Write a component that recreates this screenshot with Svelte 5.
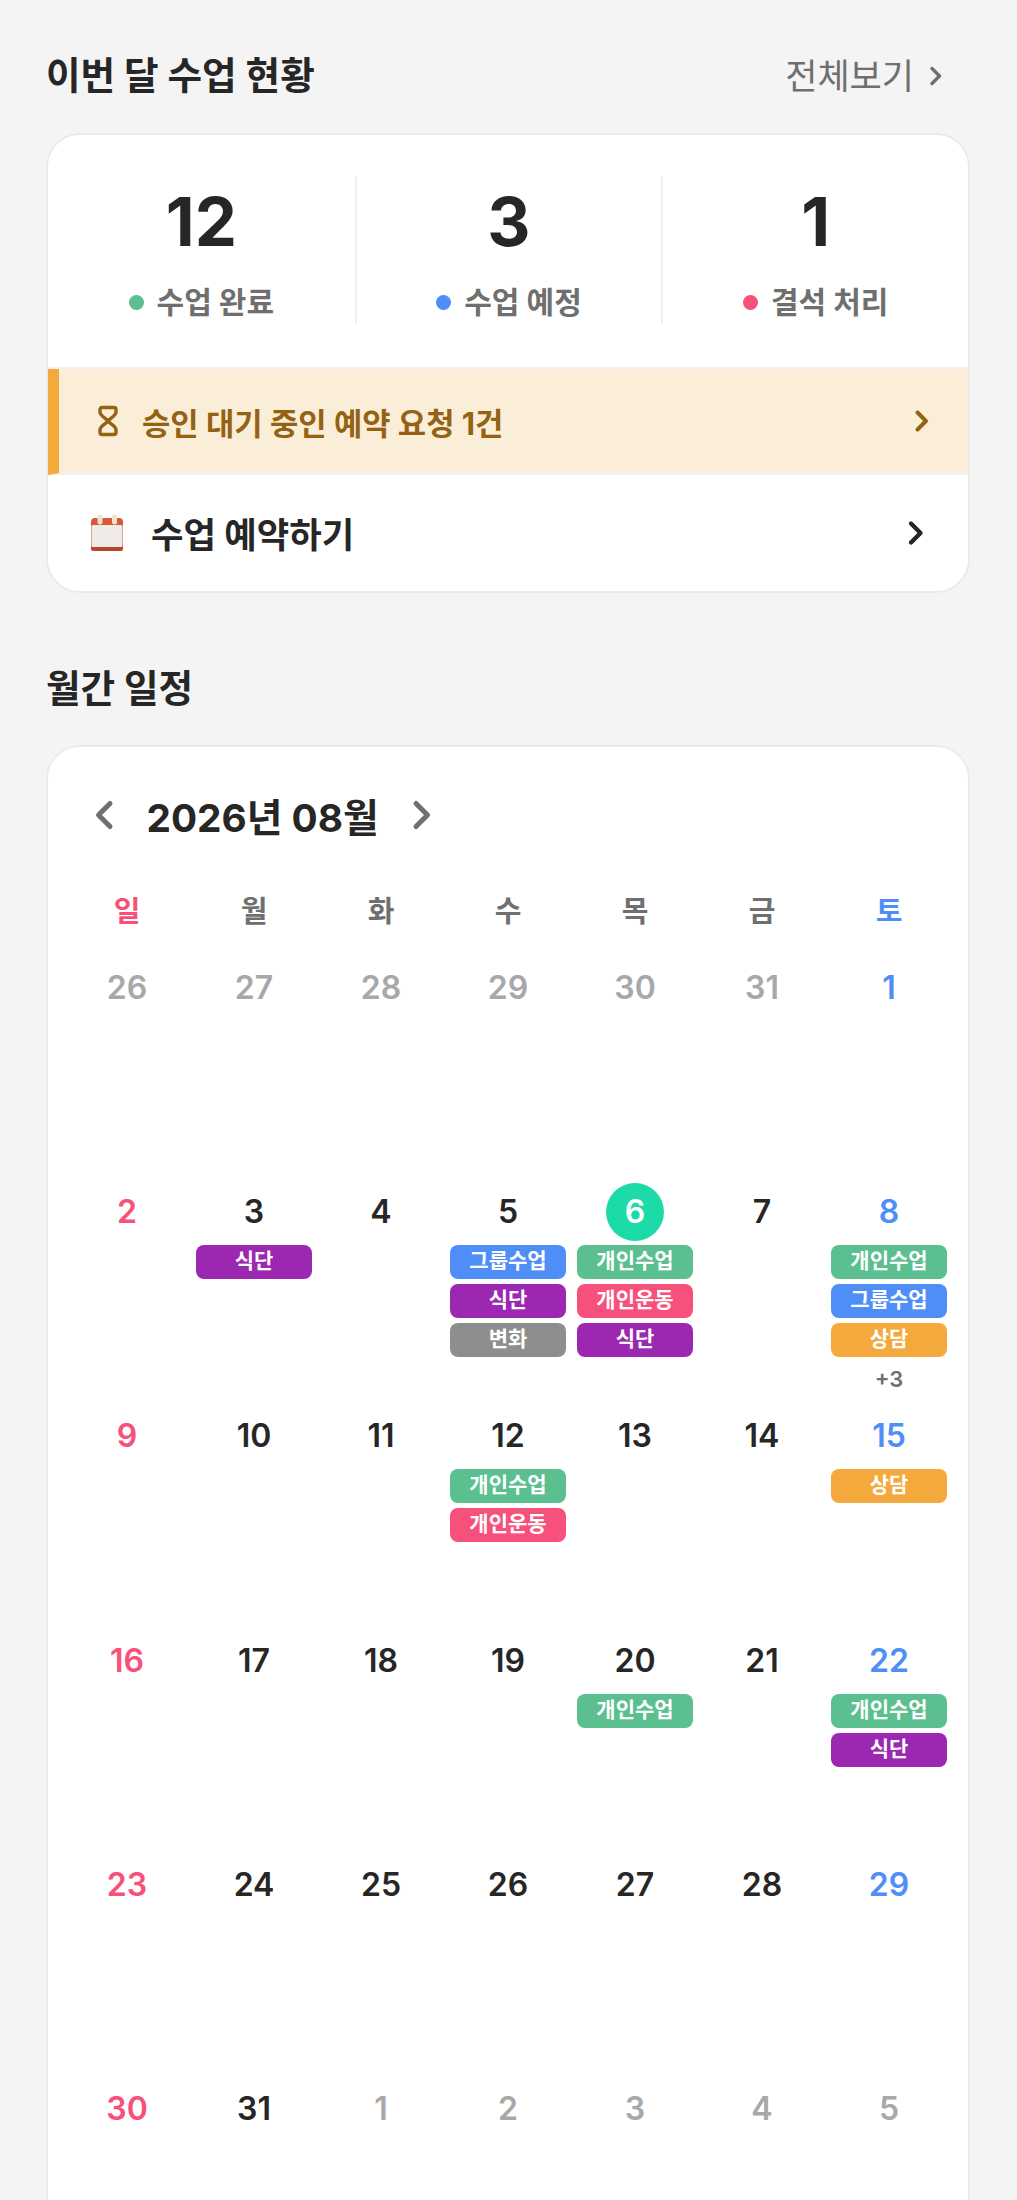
<script>
  const stats = [
    { value: '12', label: '수업 완료', color: '#5bbf8f' },
    { value: '3', label: '수업 예정', color: '#4f8ef7' },
    { value: '1', label: '결석 처리', color: '#f7507a' }
  ]

  const weekdays = ['일', '월', '화', '수', '목', '금', '토']

  const colors = {
    '개인수업': 'green',
    '그룹수업': 'blue',
    '개인운동': 'pink',
    '식단': 'purple',
    '변화': 'gray',
    '상담': 'orange'
  }

  const weeks = [
    [
      { d: 26, muted: true }, { d: 27, muted: true }, { d: 28, muted: true }, { d: 29, muted: true },
      { d: 30, muted: true }, { d: 31, muted: true }, { d: 1 }
    ],
    [
      { d: 2 }, { d: 3, ev: ['식단'] }, { d: 4 }, { d: 5, ev: ['그룹수업', '식단', '변화'] },
      { d: 6, today: true, ev: ['개인수업', '개인운동', '식단'] }, { d: 7 },
      { d: 8, ev: ['개인수업', '그룹수업', '상담'], more: 3 }
    ],
    [
      { d: 9 }, { d: 10 }, { d: 11 }, { d: 12, ev: ['개인수업', '개인운동'] }, { d: 13 }, { d: 14 },
      { d: 15, ev: ['상담'] }
    ],
    [
      { d: 16 }, { d: 17 }, { d: 18 }, { d: 19 }, { d: 20, ev: ['개인수업'] }, { d: 21 },
      { d: 22, ev: ['개인수업', '식단'] }
    ],
    [{ d: 23 }, { d: 24 }, { d: 25 }, { d: 26 }, { d: 27 }, { d: 28 }, { d: 29 }],
    [
      { d: 30 }, { d: 31 }, { d: 1, muted: true }, { d: 2, muted: true }, { d: 3, muted: true },
      { d: 4, muted: true }, { d: 5, muted: true }
    ]
  ]
</script>

<div class="page">
  <div class="section-head">
    <h2>이번 달 수업 현황</h2>
    <span class="see-all">
      <span class="see-all-text">전체보기</span>
      <svg width="20" height="22" viewBox="0 0 20 22" fill="none" stroke="currentColor" stroke-width="3.400" stroke-linecap="round" stroke-linejoin="round">
        <path d="M6 3.500l7.500 7.500L6 18.500"/>
      </svg>
    </span>
  </div>

  <section class="card summary">
    <div class="stats">
      {#each stats as s}
        <div class="stat">
          <div class="stat-value">{s.value}</div>
          <div class="stat-label"><i style="background: {s.color}"></i>{s.label}</div>
        </div>
      {/each}
    </div>

    <div class="pending">
      <svg class="hourglass" width="22" height="32" viewBox="0 0 22 32" fill="none" stroke="currentColor" stroke-width="3.400" stroke-linejoin="round" stroke-linecap="round">
        <path d="M5 2.500h12a2 2 0 0 1 2 2v2.500c0 4-5.500 5.500-8 9-2.500-3.500-8-5-8-9v-2.500a2 2 0 0 1 2-2z"/>
        <path d="M5 29.500h12a2 2 0 0 0 2-2v-2.500c0-4-5.500-5.500-8-9-2.500 3.500-8 5-8 9v2.500a2 2 0 0 0 2 2z"/>
      </svg>
      <span class="pending-text">승인 대기 중인 예약 요청 1건</span>
      <svg width="16" height="24" viewBox="0 0 16 24" fill="none" stroke="currentColor" stroke-width="4" stroke-linecap="round" stroke-linejoin="round">
        <path d="M3.500 3.500l8.500 8.500-8.500 8.500"/>
      </svg>
    </div>

    <div class="booking">
      <svg class="cal-icon" width="36" height="38" viewBox="0 0 36 38">
        <rect x="2" y="4" width="32" height="33" rx="4" fill="#d9583a"/>
        <rect x="2" y="32" width="32" height="5" rx="2.500" fill="#b5452c"/>
        <rect x="2.500" y="11" width="31" height="22" rx="1.500" fill="#efece7"/>
        <rect x="8.500" y="0.500" width="5" height="10" rx="2.500" fill="#efe3cc"/>
        <rect x="23" y="0.500" width="5" height="10" rx="2.500" fill="#efe3cc"/>
      </svg>
      <span class="booking-text">수업 예약하기</span>
      <svg width="18" height="26" viewBox="0 0 18 26" fill="none" stroke="currentColor" stroke-width="4.400" stroke-linecap="round" stroke-linejoin="round">
        <path d="M4 3.500l9.500 9.500L4 22.500"/>
      </svg>
    </div>
  </section>

  <h2 class="month-title">월간 일정</h2>

  <section class="card calendar">
    <div class="cal-nav">
      <svg width="22" height="32" viewBox="0 0 22 32" fill="none" stroke="#6f6f6f" stroke-width="5" stroke-linecap="round" stroke-linejoin="round">
        <path d="M17 4.500L5.500 16 17 27.500"/>
      </svg>
      <span class="cal-month">2026년 08월</span>
      <svg width="22" height="32" viewBox="0 0 22 32" fill="none" stroke="#6f6f6f" stroke-width="5" stroke-linecap="round" stroke-linejoin="round">
        <path d="M5 4.500L16.500 16 5 27.500"/>
      </svg>
    </div>

    <div class="grid week-head">
      {#each weekdays as w, i}
        <div class="weekday" class:sun={i === 0} class:sat={i === 6}>{w}</div>
      {/each}
    </div>

    {#each weeks as week}
      <div class="grid week">
        {#each week as day, i}
          <div class="day">
            <div
              class="num"
              class:sun={i === 0}
              class:sat={i === 6}
              class:muted={day.muted}
              class:today={day.today}
            >{day.d}</div>
            {#each day.ev || [] as e}
              <div class="event {colors[e]}">{e}</div>
            {/each}
            {#if day.more}
              <div class="more">+{day.more}</div>
            {/if}
          </div>
        {/each}
      </div>
    {/each}
  </section>
</div>

<style>
  :global(body) {
    margin: 0;
    background: #f4f4f4;
  }

  .page {
    height: 2200px;
    overflow: hidden;
    padding: 54px 47px 0 46px;
    box-sizing: border-box;
    font-family: Inter, "Noto Sans CJK KR", sans-serif;
    color: #262626;
    background: #f4f4f4;
  }

  .section-head {
    display: flex;
    align-items: center;
    justify-content: space-between;
    height: 44px;
    margin-bottom: 35px;
  }

  h2 {
    margin: 0;
    font-size: 37.600px;
    font-weight: 700;
    line-height: 46px;
  }

  .see-all {
    display: flex;
    align-items: center;
    gap: 12px;
    margin-right: 24px;
    font-size: 35px;
    font-weight: 400;
    color: #6f6f6f;
  }

  .see-all-text {
    padding-bottom: 6px;
  }

  .card {
    background: #fff;
    border: 2px solid #ebebeb;
    border-radius: 34px;
    box-sizing: border-box;
    overflow: hidden;
  }

  .summary {
    height: 460px;
  }

  .stats {
    display: grid;
    grid-template-columns: repeat(3, 1fr);
    height: 234px;
    padding-top: 41px;
    box-sizing: border-box;
    border-bottom: 2px solid #f0f0f0;
  }

  .stat {
    height: 148px;
    padding-top: 4px;
    box-sizing: border-box;
    text-align: center;
    border-left: 2px solid #f0f0f0;
  }

  .stat:first-child {
    border-left: none;
  }

  .stat-value {
    font-size: 67px;
    font-weight: 700;
    line-height: 84px;
  }

  .stat-label {
    display: flex;
    align-items: center;
    justify-content: center;
    gap: 13px;
    margin-top: 16px;
    font-size: 30px;
    font-weight: 700;
    line-height: 44px;
    color: #6f6f6f;
  }

  .stat-label i {
    width: 15px;
    height: 15px;
    border-radius: 50%;
  }

  .pending {
    display: flex;
    align-items: center;
    height: 104px;
    padding: 0 38px 0 38px;
    border-left: 11px solid #f3a93c;
    background: #faeed9;
    color: #946213;
    border-bottom: 2px solid #f0f0f0;
  }

  .pending-text {
    flex: 1;
    margin-left: 23px;
    font-size: 30.800px;
    font-weight: 700;
  }

  .booking {
    display: flex;
    align-items: center;
    height: 116px;
    padding: 0 43px 0 41px;
  }

  .booking-text {
    flex: 1;
    margin-left: 26px;
    padding-bottom: 2px;
    font-size: 35.300px;
    font-weight: 700;
  }

  .month-title {
    margin: 73px 0 33px;
  }

  .calendar {
    padding: 0 15.500px;
    height: 1600px;
  }

  .cal-nav {
    display: flex;
    align-items: center;
    height: 68px;
    margin-top: 34px;
    padding-left: 29px;
    gap: 22px;
  }

  .cal-month {
    font-size: 38.800px;
    font-weight: 700;
    margin: 0 10px;
  }

  .grid {
    display: grid;
    grid-template-columns: repeat(7, 1fr);
  }

  .week-head {
    height: 62px;
    margin-top: 33px;
  }

  .weekday {
    text-align: center;
    font-size: 29px;
    font-weight: 700;
    line-height: 60px;
    color: #6f6f6f;
  }

  .week {
    height: 224.200px;
  }

  .day {
    display: flex;
    flex-direction: column;
    align-items: center;
    padding: 0 5.500px;
  }

  .num {
    width: 58px;
    height: 58px;
    margin: 15px 0 4px;
    border-radius: 50%;
    text-align: center;
    font-size: 32px;
    font-weight: 600;
    line-height: 58px;
  }

  .sun {
    color: #f7507a;
  }

  .sat {
    color: #4f8ef7;
  }

  .muted {
    color: #a8a8a8;
  }

  .today {
    background: #1ddba8;
    color: #fff;
  }

  .event {
    width: 100%;
    height: 34px;
    margin-bottom: 5px;
    border-radius: 8px;
    text-align: center;
    font-size: 21px;
    font-weight: 700;
    line-height: 32px;
    color: #fff;
  }

  .green { background: #5bbf8f; }
  .blue { background: #4f8ef7; }
  .pink { background: #f7507a; }
  .purple { background: #9c27b0; }
  .gray { background: #8e8e8e; }
  .orange { background: #f3a93c; }

  .more {
    margin-top: 2px;
    font-size: 22px;
    font-weight: 600;
    line-height: 30px;
    color: #6f6f6f;
  }
</style>
